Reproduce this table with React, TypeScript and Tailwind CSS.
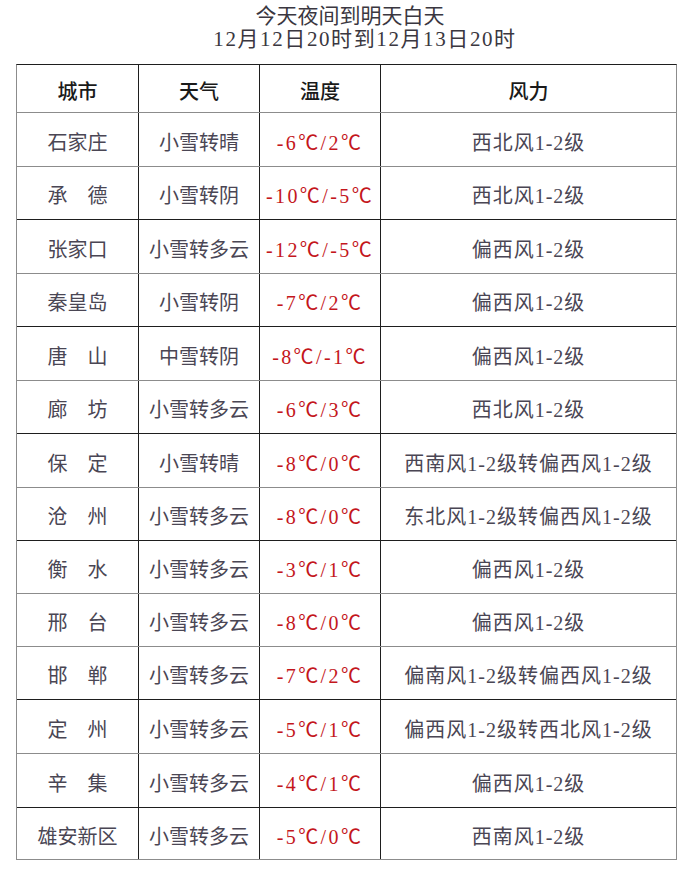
const rows: { city: string; weather: string; temp: string; wind: string; h: string; line: string }[] = [
  { city: '石家庄', weather: '小雪转晴', temp: '-6℃/2℃', wind: '西北风1-2级', h: 'h-[54px]', line: 'border-b-[#8c8c8c]' },
  { city: '承　德', weather: '小雪转阴', temp: '-10℃/-5℃', wind: '西北风1-2级', h: 'h-[53px]', line: 'border-b-[#1e1e1e]' },
  { city: '张家口', weather: '小雪转多云', temp: '-12℃/-5℃', wind: '偏西风1-2级', h: 'h-[54px]', line: 'border-b-[#8c8c8c]' },
  { city: '秦皇岛', weather: '小雪转阴', temp: '-7℃/2℃', wind: '偏西风1-2级', h: 'h-[53px]', line: 'border-b-[#1e1e1e]' },
  { city: '唐　山', weather: '中雪转阴', temp: '-8℃/-1℃', wind: '偏西风1-2级', h: 'h-[54px]', line: 'border-b-[#8c8c8c]' },
  { city: '廊　坊', weather: '小雪转多云', temp: '-6℃/3℃', wind: '西北风1-2级', h: 'h-[53px]', line: 'border-b-[#1e1e1e]' },
  { city: '保　定', weather: '小雪转晴', temp: '-8℃/0℃', wind: '西南风1-2级转偏西风1-2级', h: 'h-[54px]', line: 'border-b-[#8c8c8c]' },
  { city: '沧　州', weather: '小雪转多云', temp: '-8℃/0℃', wind: '东北风1-2级转偏西风1-2级', h: 'h-[53px]', line: 'border-b-[#1e1e1e]' },
  { city: '衡　水', weather: '小雪转多云', temp: '-3℃/1℃', wind: '偏西风1-2级', h: 'h-[53px]', line: 'border-b-[#8c8c8c]' },
  { city: '邢　台', weather: '小雪转多云', temp: '-8℃/0℃', wind: '偏西风1-2级', h: 'h-[53px]', line: 'border-b-[#8c8c8c]' },
  { city: '邯　郸', weather: '小雪转多云', temp: '-7℃/2℃', wind: '偏南风1-2级转偏西风1-2级', h: 'h-[53px]', line: 'border-b-[#1e1e1e]' },
  { city: '定　州', weather: '小雪转多云', temp: '-5℃/1℃', wind: '偏西风1-2级转西北风1-2级', h: 'h-[54px]', line: 'border-b-[#8c8c8c]' },
  { city: '辛　集', weather: '小雪转多云', temp: '-4℃/1℃', wind: '偏西风1-2级', h: 'h-[54px]', line: 'border-b-[#1e1e1e]' },
  { city: '雄安新区', weather: '小雪转多云', temp: '-5℃/0℃', wind: '西南风1-2级', h: 'h-[52px]', line: 'border-b-[#8c8c8c]' },
];

const cell = 'flex items-center justify-center border-r border-r-[#1e1e1e] pt-[6px]';

export default function App() {
  return (
    <div className="w-[690px] h-[892px] bg-white font-['Liberation_Serif','Noto_Sans_CJK_SC',serif] text-[20px] text-[#4a4654]">
      <div className="pt-[5px] flex flex-col items-center text-[21px] leading-[23px] text-[#3a3740]">
        <div className="pl-[10px]">今天夜间到明天白天</div>
        <div className="pl-[40px] tracking-[1.6px]">12月12日20时到12月13日20时</div>
      </div>
      <div className="mt-[13px] ml-[16px] w-[661px] border-t border-t-[#1e1e1e] border-l border-l-[#8c8c8c] border-r border-r-[#8c8c8c]">
        <div className="flex h-[48px] border-b border-b-[#8c8c8c] text-[#1a1a1a] font-medium">
          <div className={`${cell} w-[122px]`}>城市</div>
          <div className={`${cell} w-[121px]`}>天气</div>
          <div className={`${cell} w-[121px]`}>温度</div>
          <div className="flex flex-1 items-center justify-center pt-[6px]">风力</div>
        </div>
        {rows.map((r) => (
          <div key={r.city} className={`flex border-b ${r.h} ${r.line}`}>
            <div className={`${cell} w-[122px]`}>{r.city}</div>
            <div className={`${cell} w-[121px]`}>{r.weather}</div>
            <div className={`${cell} w-[121px] text-[#c4161c] tracking-[2.4px]`}>{r.temp}</div>
            <div className="flex flex-1 items-center justify-center pt-[6px] tracking-[1px]">{r.wind}</div>
          </div>
        ))}
      </div>
    </div>
  );
}
